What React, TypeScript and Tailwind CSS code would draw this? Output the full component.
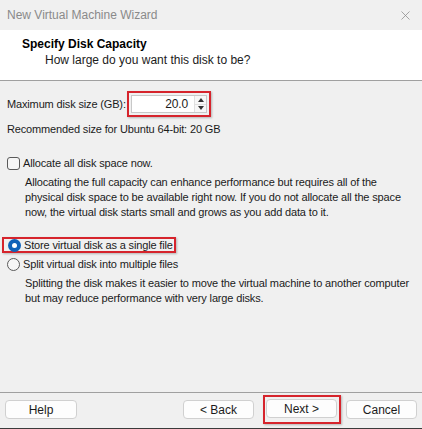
import { X } from 'lucide-react';

const font = { fontFamily: '"Liberation Sans", Arial, sans-serif' };

function WinButton({ label, className = '' }: { label: string; className?: string }) {
  return (
    <div
      className={`h-[19px] flex items-center justify-center bg-[#fdfdfd] border border-[#d0d0d0] rounded-[4px] text-[12px] text-[#1b1b1b] ${className}`}
    >
      {label}
    </div>
  );
}

function Radio({ checked }: { checked: boolean }) {
  if (checked) {
    return (
      <div className="w-[13px] h-[13px] shrink-0 rounded-full bg-[#0f62b8] flex items-center justify-center">
        <div className="w-[5px] h-[5px] rounded-full bg-white" />
      </div>
    );
  }
  return <div className="w-[13px] h-[13px] shrink-0 rounded-full border border-[#5a5a5a] bg-[#f6f6f6]" />;
}

export default function App() {
  return (
    <div
      className="w-[422px] h-[429px] flex flex-col bg-[#f0f0f0] text-[12px] text-[#1b1b1b] overflow-hidden border-b border-[#3a3a3a] whitespace-nowrap"
      style={font}
    >
      <div className="h-[30px] flex items-center justify-between pl-[7px] pr-[9px] bg-[#f0f0f0]">
        <span className="text-[12px] text-[#8a8a8a]">New Virtual Machine Wizard</span>
        <X size={15} strokeWidth={1.2} className="text-[#8a8a8a]" />
      </div>

      <div className="h-[51px] bg-white border-b border-[#a0a0a0] pl-[22px] pt-[6px]">
        <div className="font-bold text-[12px] text-black leading-[16px]">Specify Disk Capacity</div>
        <div className="pl-[23px] leading-[16px] text-[#1b1b1b]">How large do you want this disk to be?</div>
      </div>

      <div className="flex-1 flex flex-col px-[7px] pt-[10px] leading-[15px] text-[11px] tracking-[-0.15px]">
        <div className="flex items-center">
          <span className="w-[120px]">Maximum disk size (GB):</span>
          <div className="border-2 border-[#d6242c] p-[2px] w-[84px] h-[26px] flex shadow-[1px_1px_2px_rgba(0,0,0,0.25)]">
            <div className="flex-1 bg-white border border-[#c8c8c8] flex items-center">
              <span className="flex-1 text-right pr-[6px] text-[12px]">20.0</span>
              <div className="w-[12px] h-full flex flex-col border-l border-[#e0e0e0] bg-[#f7f7f7]">
                <div className="flex-1 flex items-center justify-center">
                  <div className="w-0 h-0 border-l-[3px] border-r-[3px] border-b-[4px] border-l-transparent border-r-transparent border-b-[#333]" />
                </div>
                <div className="flex-1 flex items-center justify-center border-t border-[#e0e0e0]">
                  <div className="w-0 h-0 border-l-[3px] border-r-[3px] border-t-[4px] border-l-transparent border-r-transparent border-t-[#333]" />
                </div>
              </div>
            </div>
          </div>
        </div>

        <div className="mt-[5px]">Recommended size for Ubuntu 64-bit: 20 GB</div>

        <div className="mt-[19px] flex items-center gap-[3px]">
          <div className="w-[13px] h-[13px] rounded-[3px] border border-[#5a5a5a] bg-[#f6f6f6]" />
          <span>Allocate all disk space now.</span>
        </div>
        <div className="mt-[4px] pl-[18px]">
          <div>Allocating the full capacity can enhance performance but requires all of the</div>
          <div>physical disk space to be available right now. If you do not allocate all the space</div>
          <div>now, the virtual disk starts small and grows as you add data to it.</div>
        </div>

        <div className="mt-[17px] -ml-[5px] w-[174px] h-[16px] border-2 border-[#d6242c] flex items-center pl-[4px] gap-[3px] shadow-[1px_1px_2px_rgba(0,0,0,0.25)]">
          <Radio checked />
          <span>Store virtual disk as a single file</span>
        </div>
        <div className="mt-[4px] flex items-center gap-[3px]">
          <Radio checked={false} />
          <span>Split virtual disk into multiple files</span>
        </div>
        <div className="mt-[4px] pl-[18px]">
          <div>Splitting the disk makes it easier to move the virtual machine to another computer</div>
          <div>but may reduce performance with very large disks.</div>
        </div>
      </div>

      <div className="h-[36px] border-t border-[#a0a0a0] flex items-center px-[5px] pb-[2px]">
        <WinButton label="Help" className="w-[72px]" />
        <div className="flex-1" />
        <WinButton label="< Back" className="w-[71px]" />
        <div className="ml-[9px] border-2 border-[#d6242c] pt-[2px] pb-[4px] pl-[1px] pr-[2px] -my-[4px] shadow-[1px_1px_2px_rgba(0,0,0,0.25)]">
          <WinButton label="Next >" className="w-[71px]" />
        </div>
        <WinButton label="Cancel" className="w-[71px] ml-[5px]" />
      </div>
    </div>
  );
}
